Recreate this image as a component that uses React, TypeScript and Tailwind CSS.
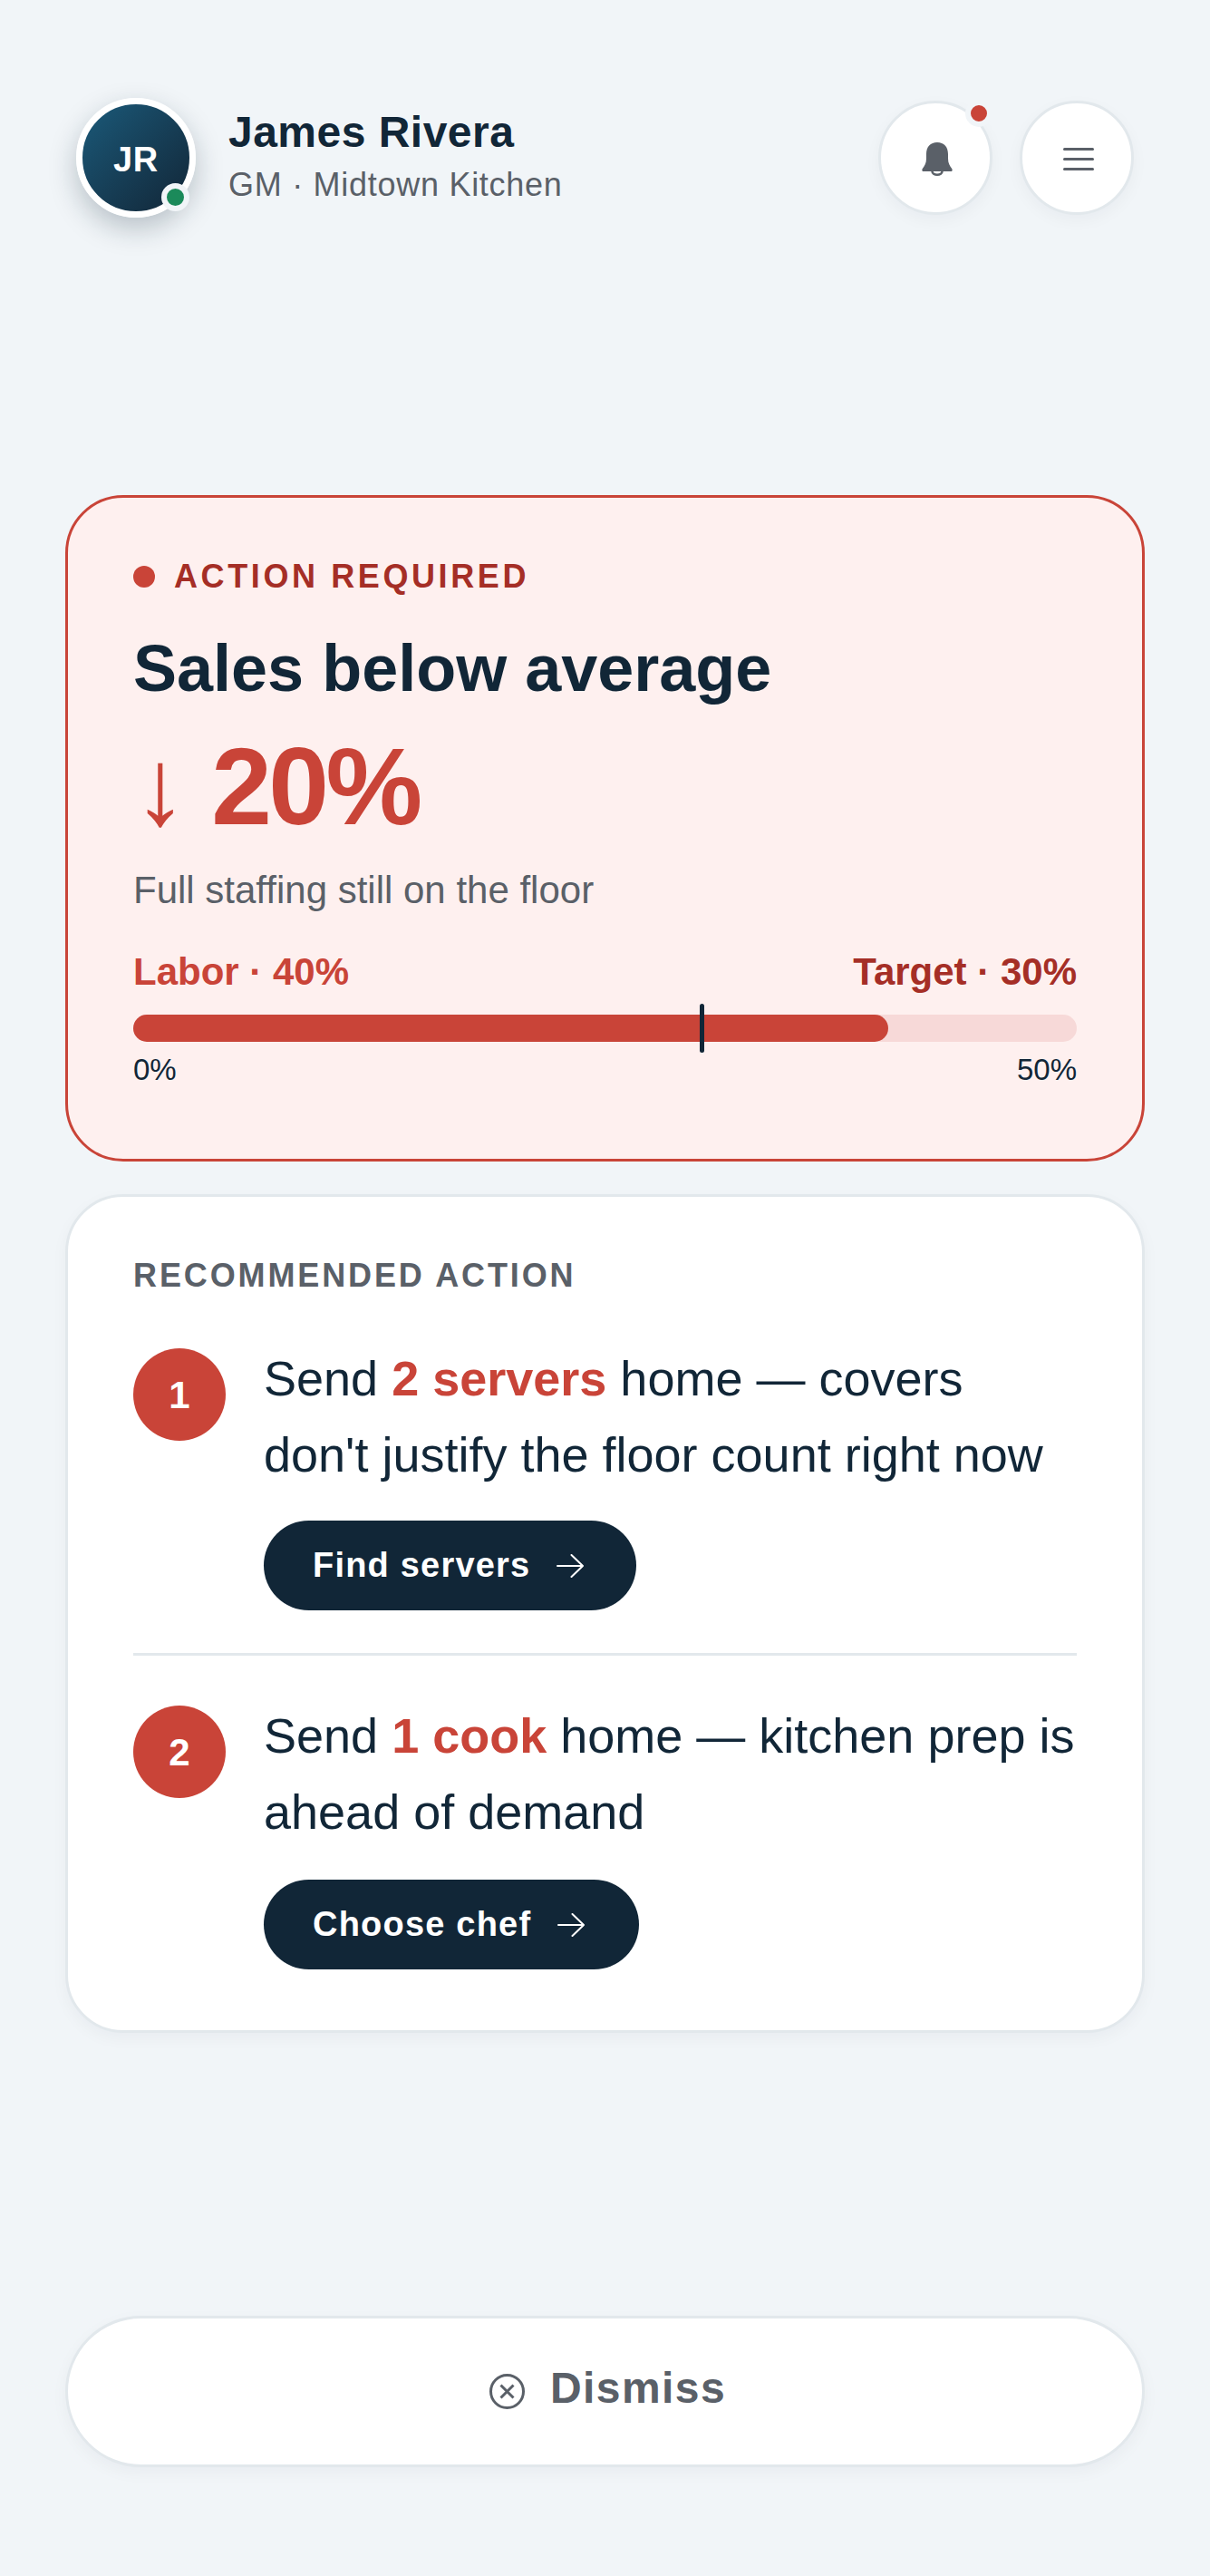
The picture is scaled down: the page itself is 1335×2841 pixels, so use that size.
const font = { fontFamily: '"Liberation Sans", Arial, sans-serif' };

function Arrow() {
  return (
    <svg width="30" height="26" viewBox="0 0 30 26" fill="none" stroke="#ffffff" strokeWidth="2" strokeLinecap="round" strokeLinejoin="round">
      <path d="M1 13h28M16.500 1 29 13 16.500 25" />
    </svg>
  );
}

function Step({ n, before, hl, after, cta, btn }: { n: string; before: string; hl: string; after: string; cta: string; btn: string }) {
  return (
    <div className="flex gap-[42px]">
      <div className="mt-[9px] flex h-[102px] w-[102px] shrink-0 items-center justify-center rounded-full bg-[#c94438] text-[42px] font-bold text-white">{n}</div>
      <div className="flex-1">
        <p className="text-[54px] leading-[84px] text-[#112637]">
          {before}
          <span className="font-bold text-[#c94438]">{hl}</span>
          {after}
        </p>
        <button className={`flex h-[99px] w-fit items-center gap-[29px] rounded-full bg-[#112637] pl-[54px] text-[38px] font-bold tracking-[1.2px] text-white ${btn}`}>
          {cta}
          <Arrow />
        </button>
      </div>
    </div>
  );
}

export default function App() {
  return (
    <div className="h-[2841px] w-full overflow-hidden bg-[#f1f5f8]" style={font}>
      <header className="flex items-center justify-between px-[84px] pt-[108px]">
        <div className="flex items-center gap-[36px]">
          <div className="relative h-[132px] w-[132px] rounded-full border-[7px] border-white bg-gradient-to-br from-[#1a5a7a] to-[#112637] shadow-[0_12px_30px_rgba(17,38,55,0.25)]">
            <div className="flex h-full items-center justify-center pt-[4px] text-[38px] font-bold tracking-[0.76px] text-white">JR</div>
            <span className="absolute bottom-0 right-0 h-[31px] w-[31px] rounded-full border-[6px] border-[#f1f5f8] bg-[#1b8a5a]" />
          </div>
          <div className="mb-[6px]">
            <div className="text-[48px] font-bold leading-[60px] tracking-[0.48px] text-[#112637]">James Rivera</div>
            <div className="mt-[5px] text-[36px] leading-[46px] tracking-[0.72px] text-[#5a6068]">GM · Midtown Kitchen</div>
          </div>
        </div>
        <div className="flex items-center gap-[30px]">
          <button className="relative flex h-[126px] w-[126px] items-center justify-center rounded-full border-[3px] border-[#e2e8ec] bg-white shadow-[0_6px_18px_rgba(17,38,55,0.04)]">
            <svg width="34" height="37" viewBox="0 0 34 37" fill="#5a6068" className="ml-[3px] mt-[2px]">
              <path d="M17 0C9.500 0 5 5 5 13v5c0 5-2 8-4.200 11C-.2 30.500.5 32 2 32h30c1.500 0 2.200-1.500 1.200-3C31 26 29 23 29 18v-5C29 5 24.500 0 17 0z" />
              <path d="M11.500 32a5.500 3.700 0 0 0 11 0" fill="none" stroke="#5a6068" strokeWidth="2.500" />
            </svg>
            <span className="absolute right-[-3px] top-[-4px] h-[30px] w-[30px] rounded-full border-[6px] border-[#f1f5f8] bg-[#c94438]" />
          </button>
          <button className="flex h-[126px] w-[126px] items-center justify-center rounded-full border-[3px] border-[#e2e8ec] bg-white shadow-[0_6px_18px_rgba(17,38,55,0.04)]">
            <span className="ml-[3px] mt-[2px] flex w-[34px] flex-col gap-[8px]">
              <span className="h-[3px] rounded-full bg-[#5a6068]" />
              <span className="h-[3px] rounded-full bg-[#5a6068]" />
              <span className="h-[3px] rounded-full bg-[#5a6068]" />
            </span>
          </button>
        </div>
      </header>

      <main className="px-[72px]">
        <section className="mt-[306px] rounded-[64px] border-[3px] border-[#c94438] bg-[#fef0ef] px-[72px] pb-[76px] pt-[65px]">
          <div className="flex items-center gap-[21px]">
            <span className="h-[24px] w-[24px] rounded-full bg-[#c94438]" />
            <span className="text-[36px] font-bold leading-[44px] tracking-[3.6px] text-[#a52e26]">ACTION REQUIRED</span>
          </div>
          <h1 className="mt-[34px] text-[72px] font-bold leading-[90px] text-[#112637]">Sales below average</h1>
          <div className="mt-[20px] text-[120px] font-bold leading-[130px] tracking-[-3.6px] text-[#c94438]">
            <span className="font-normal">↓</span> 20%
          </div>
          <p className="mt-[23px] text-[42px] leading-[54px] text-[#5a6068]">Full staffing still on the floor</p>
          <div className="mt-[36px] flex justify-between text-[42px] font-bold leading-[54px]">
            <span className="text-[#c94438]">Labor · 40%</span>
            <span className="text-[#a52e26]">Target · 30%</span>
          </div>
          <div className="relative mt-[20px] h-[30px] rounded-full bg-[#f7d9d8]">
            <div className="h-full w-[80%] rounded-full bg-[#c94438]" />
            <span className="absolute left-[60%] top-[-12px] h-[54px] w-[5px] rounded-full bg-[#112637]" />
          </div>
          <div className="mt-[9px] flex justify-between text-[33px] leading-[44px] text-[#112637]">
            <span>0%</span>
            <span>50%</span>
          </div>
        </section>

        <section className="mt-[36px] rounded-[64px] border-[3px] border-[#e2e8ec] bg-white px-[72px] pb-[67px] pt-[65px] shadow-[0_6px_18px_rgba(17,38,55,0.04)]">
          <div className="text-[36px] font-bold leading-[44px] tracking-[2.88px] text-[#5a6068]">RECOMMENDED ACTION</div>
          <div className="mt-[49px]">
            <Step n="1" before="Send " hl="2 servers" after=" home — covers don't justify the floor count right now" cta="Find servers" btn="mt-[31px] pr-[58px]" />
          </div>
          <div className="mt-[47px] border-t-[3px] border-[#e2e8ec] pt-[46px]">
            <Step n="2" before="Send " hl="1 cook" after=" home — kitchen prep is ahead of demand" cta="Choose chef" btn="mt-[33px] pr-[60px]" />
          </div>
        </section>

        <button className="mt-[312px] flex h-[167px] w-full items-center justify-center gap-[28px] rounded-full border-[3px] border-[#e2e8ec] bg-white pl-[6px] text-[48px] font-bold tracking-[1.44px] text-[#5a6068] shadow-[0_6px_18px_rgba(17,38,55,0.04)]">
          <svg width="39" height="39" viewBox="0 0 39 39" fill="none" stroke="#5a6068">
            <circle cx="19.500" cy="19.500" r="18" strokeWidth="3" />
            <path d="M12.500 12.500l14 14M26.500 12.500l-14 14" strokeWidth="3" />
          </svg>
          <span className="mb-[8px]">Dismiss</span>
        </button>
      </main>
    </div>
  );
}
